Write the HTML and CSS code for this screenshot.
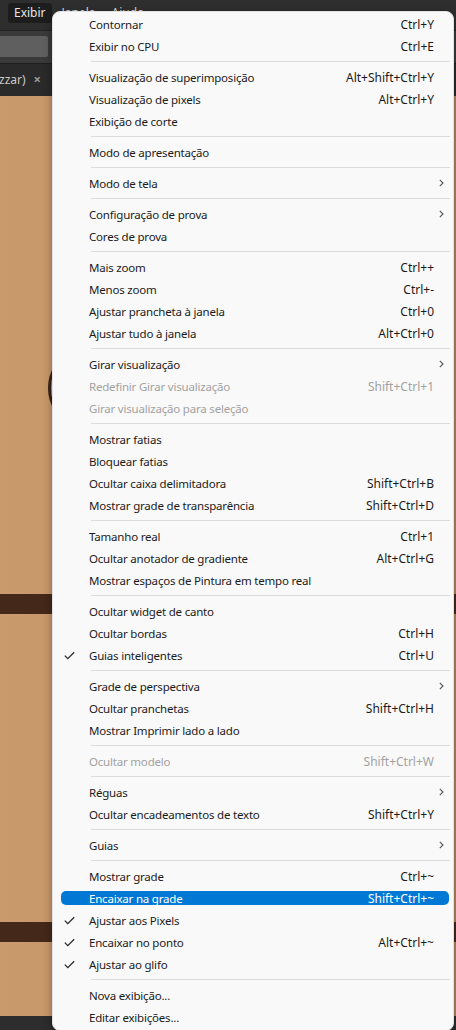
FILE: index.html
```
<!DOCTYPE html>
<html lang="pt">
<head>
<meta charset="utf-8">
<title>Exibir</title>
<link rel="stylesheet" href="styles.css">
</head>
<body>
<div class="app">
  <div class="menubar">
    <span class="mb-item active">Exibir</span>
    <span class="mb-item">Janela</span>
    <span class="mb-item">Ajuda</span>
  </div>
  <div class="toolbar"><div class="field"></div></div>
  <div class="tabs"><span class="tab-title">zzar)</span><span class="tab-close">×</span></div>
  <div class="canvas">
    <div class="arc"></div>
    <div class="band band1"></div>
    <div class="band band2"></div>
  </div>
  <div class="statusbar"></div>
</div>

<div class="menu">
  <div class="item"><span class="label">Contornar</span><span class="key">Ctrl+Y</span></div>
  <div class="item"><span class="label">Exibir no CPU</span><span class="key">Ctrl+E</span></div>
  <div class="sep"></div>
  <div class="item"><span class="label">Visualização de superimposição</span><span class="key">Alt+Shift+Ctrl+Y</span></div>
  <div class="item"><span class="label">Visualização de pixels</span><span class="key">Alt+Ctrl+Y</span></div>
  <div class="item"><span class="label">Exibição de corte</span></div>
  <div class="sep"></div>
  <div class="item"><span class="label">Modo de apresentação</span></div>
  <div class="sep"></div>
  <div class="item sub"><span class="label">Modo de tela</span><span class="arrow"><svg width="5" height="8" viewBox="0 0 5 8"><path d="M0.8 0.8 L4 4 L0.8 7.2" fill="none" stroke="#555" stroke-width="1.1"/></svg></span></div>
  <div class="sep"></div>
  <div class="item sub"><span class="label">Configuração de prova</span><span class="arrow"><svg width="5" height="8" viewBox="0 0 5 8"><path d="M0.8 0.8 L4 4 L0.8 7.2" fill="none" stroke="#555" stroke-width="1.1"/></svg></span></div>
  <div class="item"><span class="label">Cores de prova</span></div>
  <div class="sep"></div>
  <div class="item"><span class="label">Mais zoom</span><span class="key">Ctrl++</span></div>
  <div class="item"><span class="label">Menos zoom</span><span class="key">Ctrl+-</span></div>
  <div class="item"><span class="label">Ajustar prancheta à janela</span><span class="key">Ctrl+0</span></div>
  <div class="item"><span class="label">Ajustar tudo à janela</span><span class="key">Alt+Ctrl+0</span></div>
  <div class="sep"></div>
  <div class="item sub"><span class="label">Girar visualização</span><span class="arrow"><svg width="5" height="8" viewBox="0 0 5 8"><path d="M0.8 0.8 L4 4 L0.8 7.2" fill="none" stroke="#555" stroke-width="1.1"/></svg></span></div>
  <div class="item disabled"><span class="label">Redefinir Girar visualização</span><span class="key">Shift+Ctrl+1</span></div>
  <div class="item disabled"><span class="label">Girar visualização para seleção</span></div>
  <div class="sep"></div>
  <div class="item"><span class="label">Mostrar fatias</span></div>
  <div class="item"><span class="label">Bloquear fatias</span></div>
  <div class="item"><span class="label">Ocultar caixa delimitadora</span><span class="key">Shift+Ctrl+B</span></div>
  <div class="item"><span class="label">Mostrar grade de transparência</span><span class="key">Shift+Ctrl+D</span></div>
  <div class="sep"></div>
  <div class="item"><span class="label">Tamanho real</span><span class="key">Ctrl+1</span></div>
  <div class="item"><span class="label">Ocultar anotador de gradiente</span><span class="key">Alt+Ctrl+G</span></div>
  <div class="item"><span class="label">Mostrar espaços de Pintura em tempo real</span></div>
  <div class="sep"></div>
  <div class="item"><span class="label">Ocultar widget de canto</span></div>
  <div class="item"><span class="label">Ocultar bordas</span><span class="key">Ctrl+H</span></div>
  <div class="item"><span class="check"><svg width="11" height="9" viewBox="0 0 11 9"><path d="M0.8 4.6 L3.8 7.6 L10.2 1.2" fill="none" stroke="#2a2a2a" stroke-width="1.3"/></svg></span><span class="label">Guias inteligentes</span><span class="key">Ctrl+U</span></div>
  <div class="sep"></div>
  <div class="item sub"><span class="label">Grade de perspectiva</span><span class="arrow"><svg width="5" height="8" viewBox="0 0 5 8"><path d="M0.8 0.8 L4 4 L0.8 7.2" fill="none" stroke="#555" stroke-width="1.1"/></svg></span></div>
  <div class="item"><span class="label">Ocultar pranchetas</span><span class="key">Shift+Ctrl+H</span></div>
  <div class="item"><span class="label">Mostrar Imprimir lado a lado</span></div>
  <div class="sep"></div>
  <div class="item disabled"><span class="label">Ocultar modelo</span><span class="key">Shift+Ctrl+W</span></div>
  <div class="sep"></div>
  <div class="item sub"><span class="label">Réguas</span><span class="arrow"><svg width="5" height="8" viewBox="0 0 5 8"><path d="M0.8 0.8 L4 4 L0.8 7.2" fill="none" stroke="#555" stroke-width="1.1"/></svg></span></div>
  <div class="item"><span class="label">Ocultar encadeamentos de texto</span><span class="key">Shift+Ctrl+Y</span></div>
  <div class="sep"></div>
  <div class="item sub"><span class="label">Guias</span><span class="arrow"><svg width="5" height="8" viewBox="0 0 5 8"><path d="M0.8 0.8 L4 4 L0.8 7.2" fill="none" stroke="#555" stroke-width="1.1"/></svg></span></div>
  <div class="sep"></div>
  <div class="item"><span class="label">Mostrar grade</span><span class="key">Ctrl+~</span></div>
  <div class="item hl"><span class="label">Encaixar na grade</span><span class="key">Shift+Ctrl+~</span></div>
  <div class="item"><span class="check"><svg width="11" height="9" viewBox="0 0 11 9"><path d="M0.8 4.6 L3.8 7.6 L10.2 1.2" fill="none" stroke="#2a2a2a" stroke-width="1.3"/></svg></span><span class="label">Ajustar aos Pixels</span></div>
  <div class="item"><span class="check"><svg width="11" height="9" viewBox="0 0 11 9"><path d="M0.8 4.6 L3.8 7.6 L10.2 1.2" fill="none" stroke="#2a2a2a" stroke-width="1.3"/></svg></span><span class="label">Encaixar no ponto</span><span class="key">Alt+Ctrl+~</span></div>
  <div class="item"><span class="check"><svg width="11" height="9" viewBox="0 0 11 9"><path d="M0.8 4.6 L3.8 7.6 L10.2 1.2" fill="none" stroke="#2a2a2a" stroke-width="1.3"/></svg></span><span class="label">Ajustar ao glifo</span></div>
  <div class="sep"></div>
  <div class="item"><span class="label">Nova exibição...</span></div>
  <div class="item"><span class="label">Editar exibições...</span></div>
</div>
</body>
</html>
```
FILE: styles.css
```
* { box-sizing: border-box; }
html, body {
  margin: 0;
  padding: 0;
  width: 456px;
  height: 1030px;
  overflow: hidden;
  background: #2b2b2b;
  font-family: "Noto Sans", "Open Sans", sans-serif;
}
.app {
  display: flex;
  flex-direction: column;
  height: 1030px;
}
.menubar {
  height: 31px;
  background: #2e2e2e;
  display: flex;
  align-items: flex-start;
  padding: 3px 0 0 8px;
  gap: 4px;
  border-bottom: 1px solid #232323;
}
.mb-item {
  color: #d8d8d8;
  font-size: 12px;
  line-height: 20px;
  padding: 0 6px;
  border-radius: 3px;
}
.mb-item.active {
  background: #1d1d1d;
  color: #e6e6e6;
}
.toolbar {
  height: 32px;
  background: #3a3a3a;
  padding: 5px 0 0 0;
}
.field {
  width: 48px;
  height: 21px;
  background: #5f5f5f;
  border-radius: 0 2px 2px 0;
}
.tabs {
  height: 33px;
  background: #2a2a2a;
  border-top: 1px solid #1e1e1e;
  display: flex;
  align-items: center;
  padding-left: 0;
  gap: 8px;
  color: #c9c9c9;
  font-size: 12px;
}
.tab-title { margin-left: -1px; margin-top: -2px; }
.tab-close { font-size: 13px; color: #9a9a9a; font-weight: bold; margin-top: -2px; }
.canvas {
  flex: 1;
  position: relative;
  background: linear-gradient(90deg, #c99a6c 0%, #c19267 60%, #b4865e 100%);
  overflow: hidden;
}
.band {
  position: absolute;
  left: 0;
  right: 0;
  height: 20px;
  background: #44291a;
}
.band1 { top: 498px; }
.band2 { top: 826px; }
.arc {
  position: absolute;
  left: 48px;
  top: 262px;
  width: 40px;
  height: 60px;
  border-left: 3px solid #3a2418;
  border-radius: 50%;
}
.statusbar {
  height: 14px;
  background: #2d2d2d;
}

/* Menu overlay */
.menu {
  position: absolute;
  left: 52px;
  top: 11px;
  width: 402px;
  padding: 1px 0 2px 0;
  background: #f9f9f9;
  border: 1px solid #e2e2e2;
  border-radius: 8px;
  box-shadow: 0 3px 10px rgba(0, 0, 0, 0.35);
  font-size: 12px;
  color: #1b1b1b;
}
.item {
  position: relative;
  height: 22px;
  display: flex;
  align-items: center;
  padding: 0 19px 0 36px;
  white-space: nowrap;
}
.item .label {
  flex: 1;
  position: relative;
  font-size: 11.5px;
  letter-spacing: -0.2px;
}
.item .key {
  position: relative;
}
.item .check {
  position: absolute;
  left: 11px;
  top: 7px;
  display: flex;
}
.item .arrow {
  position: absolute;
  right: 9px;
  top: 7px;
  display: flex;
}
.item.disabled { color: #a2a2a2; }
.item.hl { color: #ffffff; }
.item.hl::before {
  content: "";
  position: absolute;
  left: 8px;
  right: 4px;
  top: 4px;
  bottom: 4px;
  background: #0078d4;
  border-radius: 5px;
}
.sep {
  height: 1px;
  margin: 4px 3px 4px 38px;
  background: #dcdcdc;
}
```
